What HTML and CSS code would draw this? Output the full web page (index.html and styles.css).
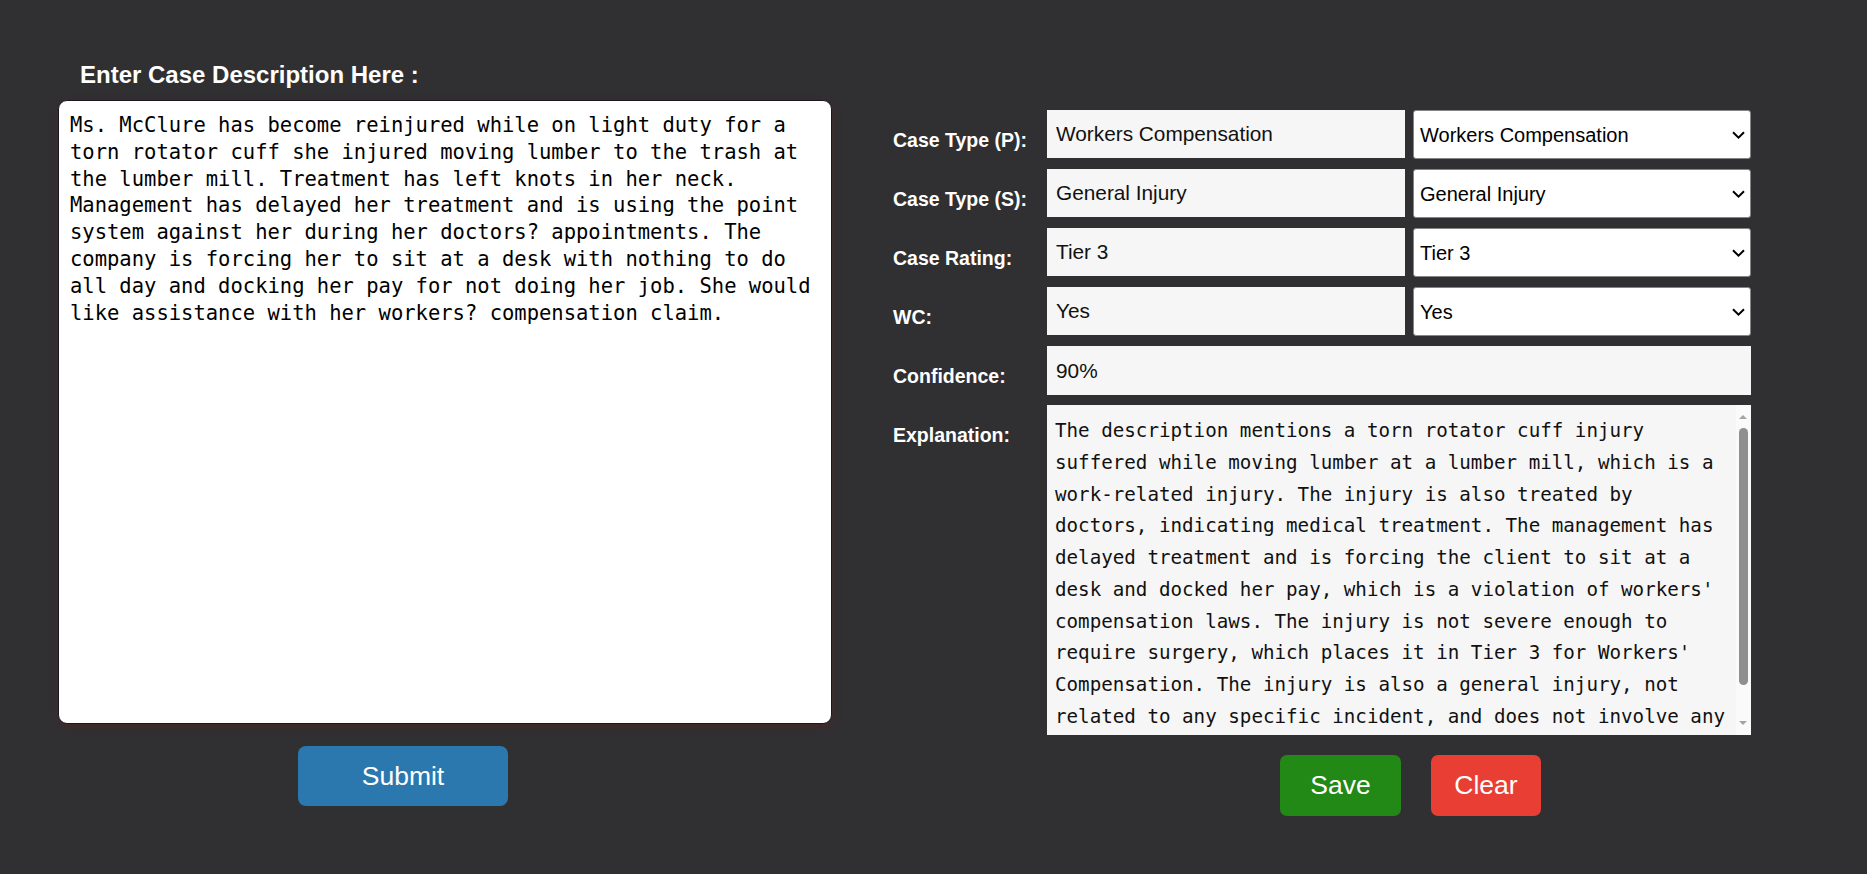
FILE: index.html
```html
<!DOCTYPE html>
<html lang="en">
<head>
<meta charset="utf-8">
<title>Case Classifier</title>
<link rel="stylesheet" href="styles.css">
</head>
<body>
<div class="page">
  <section class="left">
    <h2 class="heading">Enter Case Description Here :</h2>
    <textarea class="desc" spellcheck="false">Ms. McClure has become reinjured while on light duty for a torn rotator cuff she injured moving lumber to the trash at the lumber mill. Treatment has left knots in her neck. Management has delayed her treatment and is using the point system against her during her doctors? appointments. The company is forcing her to sit at a desk with nothing to do all day and docking her pay for not doing her job. She would like assistance with her workers? compensation claim.</textarea>
    <button class="btn submit">Submit</button>
  </section>
  <section class="right">
    <div class="form-grid">
      <label class="lbl">Case Type (P):</label>
      <input class="field" value="Workers Compensation">
      <div class="select-wrap">
        <select class="pick"><option>Workers Compensation</option></select>
        <svg class="chev" viewBox="0 0 13 8"><polyline points="1,1.2 6.5,6.6 12,1.2"/></svg>
      </div>

      <label class="lbl">Case Type (S):</label>
      <input class="field" value="General Injury">
      <div class="select-wrap">
        <select class="pick"><option>General Injury</option></select>
        <svg class="chev" viewBox="0 0 13 8"><polyline points="1,1.2 6.5,6.6 12,1.2"/></svg>
      </div>

      <label class="lbl">Case Rating:</label>
      <input class="field" value="Tier 3">
      <div class="select-wrap">
        <select class="pick"><option>Tier 3</option></select>
        <svg class="chev" viewBox="0 0 13 8"><polyline points="1,1.2 6.5,6.6 12,1.2"/></svg>
      </div>

      <label class="lbl">WC:</label>
      <input class="field" value="Yes">
      <div class="select-wrap">
        <select class="pick"><option>Yes</option></select>
        <svg class="chev" viewBox="0 0 13 8"><polyline points="1,1.2 6.5,6.6 12,1.2"/></svg>
      </div>

      <label class="lbl">Confidence:</label>
      <input class="field wide" value="90%">

      <label class="lbl">Explanation:</label>
      <div class="explain">
        <p class="explain-text">The description mentions a torn rotator cuff injury suffered while moving lumber at a lumber mill, which is a work-related injury. The injury is also treated by doctors, indicating medical treatment. The management has delayed treatment and is forcing the client to sit at a desk and docked her pay, which is a violation of workers' compensation laws. The injury is not severe enough to require surgery, which places it in Tier 3 for Workers' Compensation. The injury is also a general injury, not related to any specific incident, and does not involve any</p>
        <div class="vscroll" aria-hidden="true">
          <span class="arrow-up"></span>
          <span class="thumb"></span>
          <span class="arrow-down"></span>
        </div>
      </div>

      <div class="actions">
        <button class="btn save">Save</button>
        <button class="btn clear">Clear</button>
      </div>
    </div>
  </section>
</div>
</body>
</html>
```

FILE: styles.css
```css
html, body {
  margin: 0;
  padding: 0;
}

body {
  background: #303032;
  font-family: "Liberation Sans", Arial, sans-serif;
}

.page {
  display: flex;
  align-items: flex-start;
  gap: 61px;
  padding-left: 58px;
}

.left {
  width: 774px;
  padding-top: 61px;
  display: flex;
  flex-direction: column;
  align-items: flex-start;
}

.heading {
  margin: 0 0 12px;
  padding-left: 22px;
  font-size: 24px;
  line-height: 27px;
  font-weight: bold;
  color: #ffffff;
}

.desc {
  box-sizing: border-box;
  width: 774px;
  height: 624px;
  margin: 0;
  padding: 11px;
  border: 1px solid #1d1520;
  border-radius: 9px;
  background: #ffffff;
  color: #000000;
  font-family: "DejaVu Sans Mono", "Liberation Mono", monospace;
  font-size: 20.5px;
  line-height: 26.8px;
  resize: none;
  overflow: hidden;
  outline: none;
  box-shadow: 0 3px 8px rgba(90, 30, 30, 0.45);
}

.btn {
  border: none;
  padding: 0;
  color: #ffffff;
  font-family: "Liberation Sans", Arial, sans-serif;
  font-size: 26.5px;
  cursor: pointer;
}

.submit {
  margin: 22px 0 0 240px;
  width: 210px;
  height: 60px;
  border-radius: 8px;
  background: #2b78ae;
}

.right {
  padding-top: 110px;
}

.form-grid {
  display: grid;
  grid-template-columns: 146px 358px 338px;
  column-gap: 8px;
  row-gap: 10px;
  align-items: start;
}

.lbl {
  padding-top: 19px;
  color: #ffffff;
  font-weight: bold;
  font-size: 19.5px;
  line-height: 22px;
}

.field {
  box-sizing: border-box;
  width: 100%;
  height: 48px;
  margin: 0;
  padding: 0 9px;
  border: none;
  background: #f6f6f6;
  color: #111111;
  font-family: "Liberation Sans", Arial, sans-serif;
  font-size: 20.8px;
  outline: none;
}

.wide {
  grid-column: 2 / 4;
  height: 49px;
}

.select-wrap {
  position: relative;
}

.pick {
  appearance: none;
  -webkit-appearance: none;
  box-sizing: border-box;
  width: 100%;
  height: 49px;
  margin: 0;
  padding: 0 30px 0 6px;
  border: 1px solid #858585;
  border-radius: 3px;
  background: #ffffff;
  color: #000000;
  font-family: "Liberation Sans", Arial, sans-serif;
  font-size: 20px;
  outline: none;
}

.chev {
  position: absolute;
  right: 6px;
  top: 50%;
  width: 13px;
  height: 8px;
  transform: translateY(-50%);
  pointer-events: none;
  fill: none;
  stroke: #000000;
  stroke-width: 2;
}

.explain {
  position: relative;
  grid-column: 2 / 4;
  box-sizing: border-box;
  height: 330px;
  padding: 10px 19px 0 8px;
  background: #f6f6f6;
  overflow: hidden;
}

.explain-text {
  margin: 0;
  width: 58.5ch;
  font-family: "DejaVu Sans Mono", "Liberation Mono", monospace;
  font-size: 19.2px;
  line-height: 31.75px;
  color: #111111;
}

.vscroll {
  position: absolute;
  top: 0;
  right: 0;
  bottom: 0;
  width: 15px;
  background: #fafafa;
}

.arrow-up {
  position: absolute;
  top: 10px;
  left: 3px;
  width: 0;
  height: 0;
  border-left: 4.5px solid transparent;
  border-right: 4.5px solid transparent;
  border-bottom: 4.5px solid #a3a3a3;
}

.arrow-down {
  position: absolute;
  bottom: 10px;
  left: 3px;
  width: 0;
  height: 0;
  border-left: 4.5px solid transparent;
  border-right: 4.5px solid transparent;
  border-top: 4.5px solid #a3a3a3;
}

.thumb {
  position: absolute;
  top: 23px;
  left: 3px;
  width: 9px;
  height: 257px;
  border-radius: 5px;
  background: #8f8f8f;
}

.actions {
  grid-column: 2 / 4;
  display: flex;
  justify-content: center;
  gap: 30px;
  padding-left: 23px;
  margin-top: 10px;
}

.save {
  width: 121px;
  height: 61px;
  border-radius: 7px;
  background: #228816;
}

.clear {
  width: 110px;
  height: 61px;
  border-radius: 7px;
  background: #e83e33;
}
```
